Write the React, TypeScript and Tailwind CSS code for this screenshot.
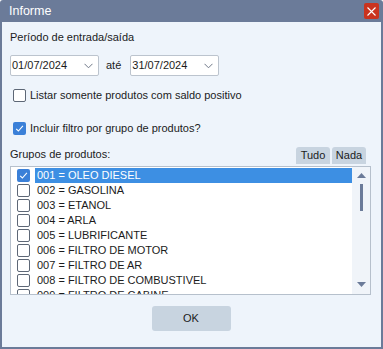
import { useState } from "react";

const groups = [
  "001 = OLEO DIESEL",
  "002 = GASOLINA",
  "003 = ETANOL",
  "004 = ARLA",
  "005 = LUBRIFICANTE",
  "006 = FILTRO DE MOTOR",
  "007 = FILTRO DE AR",
  "008 = FILTRO DE COMBUSTIVEL",
  "009 = FILTRO DE CABINE",
  "010 = ADITIVO",
];

function Check({ checked }: { checked: boolean }) {
  return checked ? (
    <span className="w-[13px] h-[13px] rounded-[2px] bg-[#3b80d8] flex items-center justify-center shrink-0">
      <svg width="9" height="9" viewBox="0 0 9 9" fill="none">
        <path d="M1.2 4.8 L3.4 7 L7.9 1.8" stroke="white" strokeWidth="1.1" />
      </svg>
    </span>
  ) : (
    <span className="w-[13px] h-[13px] rounded-[2px] bg-white border border-[#5d6776] shrink-0" />
  );
}

function DateBox({ value }: { value: string }) {
  return (
    <div className="w-[89px] h-[21px] bg-white border border-[#bcc4ce] rounded-[2px] flex items-center justify-between pl-[1px] pr-[5px]">
      <span>{value}</span>
      <svg width="9" height="6" viewBox="0 0 9 6" fill="none">
        <path d="M0.5 0.8 L4.5 4.8 L8.5 0.8" stroke="#6f7888" strokeWidth="1" />
      </svg>
    </div>
  );
}

export default function App() {
  const [checked] = useState<number[]>([0]);

  return (
    <div
      className="w-[383px] h-[349px] bg-[#6b7b99] flex flex-col px-[2px] pb-[2px] rounded-t-[3px] text-[11px] text-[#1b1b1b] overflow-hidden"
      style={{ fontFamily: '"Liberation Sans", Arial, sans-serif' }}
    >
      {/* Title bar */}
      <div className="h-[22px] flex items-center justify-between pl-[7px] pr-[2px] shrink-0">
        <span className="text-white text-[12.5px]">Informe</span>
        <div className="w-[15px] h-[16px] bg-[#c9331f] rounded-[2px] flex items-center justify-center">
          <svg width="9" height="9" viewBox="0 0 9 9" fill="none">
            <path d="M0.5 0.5 L8.5 8.5 M8.5 0.5 L0.5 8.5" stroke="white" strokeWidth="1.1" />
          </svg>
        </div>
      </div>

      {/* Body */}
      <div className="flex-1 bg-[#eef4fb] flex flex-col pl-[8px] pr-[10px]">
        <div className="mt-[8px] h-[15px] leading-[15px]">Período de entrada/saída</div>

        <div className="mt-[10px] flex items-center">
          <DateBox value="01/07/2024" />
          <span className="ml-[7px] mr-[9px]">até</span>
          <DateBox value="31/07/2024" />
        </div>

        <div className="mt-[13px] flex items-center gap-[4px] pl-[3px] h-[13px]">
          <Check checked={false} />
          <span>Listar somente produtos com saldo positivo</span>
        </div>

        <div className="mt-[20px] flex items-center gap-[4px] pl-[3px] h-[13px]">
          <Check checked={true} />
          <span>Incluir filtro por grupo de produtos?</span>
        </div>

        <div className="mt-[12px] h-[17px] flex items-end justify-between">
          <span className="leading-[15px] mb-[2px]">Grupos de produtos:</span>
          <div className="flex gap-[2px] mr-[5px] h-[17px]">
            <button className="w-[34px] h-[17px] bg-[#c8d4e0] rounded-t-[3px] flex items-center justify-center">
              Tudo
            </button>
            <button className="w-[34px] h-[17px] bg-[#c8d4e0] rounded-t-[3px] flex items-center justify-center">
              Nada
            </button>
          </div>
        </div>

        {/* List */}
        <div className="mt-[2px] h-[129px] bg-white border border-[#b6c0cc] flex overflow-hidden">
          <div className="flex-1 pt-[1px] pl-[6px] overflow-hidden">
            {groups.map((g, i) => (
              <div key={g} className="h-[15px] flex items-center">
                <Check checked={checked.includes(i)} />
                <span
                  className={
                    "ml-[5px] flex-1 h-[15px] leading-[15px] pl-[2px] " +
                    (i === 0 ? "bg-[#3d8fe3] text-white" : "")
                  }
                >
                  {g}
                </span>
              </div>
            ))}
          </div>
          <div className="w-[18px] bg-[#f0f4f9] flex flex-col items-center shrink-0">
            <svg className="mt-[6px]" width="9" height="5" viewBox="0 0 9 5">
              <path d="M0 5 L4.5 0 L9 5 Z" fill="#6b7b99" />
            </svg>
            <div className="mt-[6px] w-[3px] h-[27px] bg-[#6b7b99]" />
            <div className="flex-1" />
            <svg className="mb-[7px]" width="9" height="5" viewBox="0 0 9 5">
              <path d="M0 0 L4.5 5 L9 0 Z" fill="#6b7b99" />
            </svg>
          </div>
        </div>

        <div className="mt-[11px] flex justify-center">
          <button className="w-[79px] h-[25px] bg-[#c8d4e0] rounded-[3px] ml-[1px]">OK</button>
        </div>
      </div>
    </div>
  );
}
